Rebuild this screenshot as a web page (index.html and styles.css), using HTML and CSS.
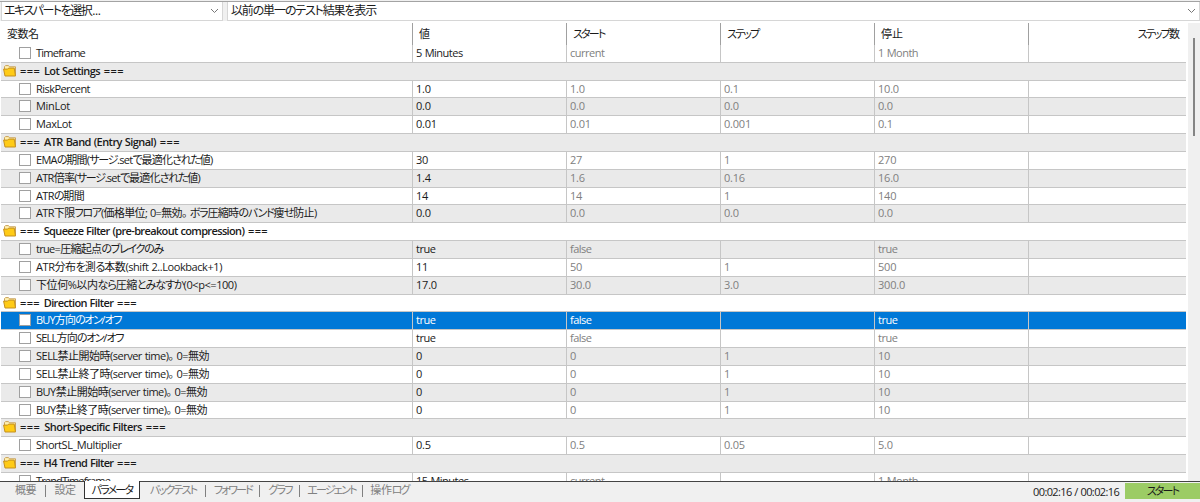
FILE: index.html
```html
<!DOCTYPE html>
<html lang="ja">
    <head>
        <meta charset="UTF-8" />
        <title>Strategy Tester</title>
        <link rel="stylesheet" href="styles.css">
    </head>
    <body>
        <div class="tester">
            <div class="toolbar">
                <div class="select expert">
                    <span class="label-expert">エキスパートを選択<span class="dots">...</span></span>
                    <svg class="arrow" width="9" height="6" viewBox="0 0 9 6"><path d="M1 1l3.5 3.5L8 1" /></svg>
                </div>
                <div class="select result">
                    <span class="label-result">以前の単一のテスト結果を表示</span>
                    <svg class="arrow" width="9" height="6" viewBox="0 0 9 6"><path d="M1 1l3.5 3.5L8 1" /></svg>
                </div>
            </div>
            <div class="content">
                <div class="grid">
                    <div class="header">
                        <div class="h-name">変数名</div>
                        <div>値</div>
                        <div><span class="kana">スタート</span></div>
                        <div><span class="kana">ステップ</span></div>
                        <div>停止</div>
                        <div class="h-steps"><span class="kana">ステップ</span>数</div>
                    </div>
                    <div id="rows"></div>
                </div>
                <div class="scrollbar"><div class="thumb"></div></div>
            </div>
            <div class="footer">
                <div class="tabs">
                    <div class="tab t1">概要</div>
                    <div class="tab t2">設定</div>
                    <div class="tab t3 active"><span class="kana">パラメータ</span></div>
                    <div class="tab t4"><span class="kana">バックテスト</span></div>
                    <div class="tab t5"><span class="kana">フォワード</span></div>
                    <div class="tab t6"><span class="kana">グラフ</span></div>
                    <div class="tab t7"><span class="kana">エージェント</span></div>
                    <div class="tab t8">操作<span class="kana">ログ</span></div>
                </div>
                <div class="time">00:02:16 / 00:02:16</div>
                <div class="start"><span class="kana">スタート</span></div>
            </div>
        </div>
        <script src="script.js"></script>
    </body>
</html>
```
FILE: styles.css
```css
body {
    margin: 0;
    background-color: #f0f0f0;
    font-family: "Open Sans", "Noto Sans CJK JP", sans-serif;
    font-size: 11px;
    color: #1a1a1a;
    font-feature-settings: "palt";
}
.tester {
    display: flex;
    flex-direction: column;
    width: 1200px;
    height: 502px;
    overflow: hidden;
}
.toolbar {
    display: flex;
    flex: none;
    gap: 4px;
    height: 20px;
    margin-top: 1px;
    box-sizing: border-box;
    border-top: 1px solid #a3a3a3;
    padding-left: 1px;
}
.select {
    display: flex;
    align-items: center;
    justify-content: space-between;
    box-sizing: border-box;
    height: 19px;
    padding: 0 3px;
    background-color: #fff;
    border: 1px solid #d6d6d6;
    border-top: none;
    font-size: 12px;
    line-height: 16px;
    white-space: nowrap;
}
.expert {
    width: 222px;
    padding-left: 2px;
}
.result {
    width: 973px;
}
.label-expert {
    letter-spacing: -1.5px;
}
.label-expert .dots {
    margin-left: 1px;
    letter-spacing: -0.3px;
}
.label-result {
    letter-spacing: -1.15px;
}
.arrow {
    fill: none;
    stroke: #777;
}
.content {
    display: flex;
    flex: none;
    height: 461px;
    box-sizing: border-box;
    padding: 1px 0 0 1px;
    background-color: #fff;
    border-bottom: 1px solid #444;
    overflow: hidden;
}
.grid {
    width: 1185px;
}
.header,
.row {
    display: grid;
    grid-template-columns: 411px 154px 154px 154px 154px 158px;
}
.header {
    height: 22px;
    margin-top: 1px;
}
.header div {
    border-left: 1px solid #a0a0a0;
    padding-left: 6px;
    line-height: 21px;
}
.header .h-name {
    border-left: none;
    padding-left: 6px;
    letter-spacing: -0.5px;
}
.header .h-steps {
    text-align: right;
    padding-right: 6px;
}
.header .kana {
    letter-spacing: -1.8px;
}
.row {
    height: 17.83px;
    box-sizing: border-box;
    border-bottom: 1px solid #c6c6c6;
    line-height: 15px;
    white-space: nowrap;
}
.row:nth-child(even) {
    background-color: #eaeaea;
}
.cell {
    border-left: 1px solid #c6c6c6;
    padding-left: 3px;
    color: #808080;
    letter-spacing: -0.2px;
}
.cell.value {
    color: #1a1a1a;
}
.cell.word {
    letter-spacing: -0.5px;
    word-spacing: 0.5px;
}
.name {
    display: flex;
    padding-left: 18px;
}
.box {
    flex: none;
    width: 10px;
    height: 10px;
    margin: 2px 5px 0 0;
    background-color: #fff;
    border: 1px solid #a0a0a0;
}
.group {
    display: flex;
    padding-left: 2px;
    font-weight: 600;
}
.folder {
    margin: 1px 3px 0 0;
}
.fit {
    letter-spacing: var(--spacing, 0);
    word-spacing: 0.5px;
}
.fit .kana {
    letter-spacing: calc(var(--spacing, 0px) - 0.6px);
}
.fit .rule {
    letter-spacing: calc(var(--spacing, 0px) + 1px);
}
.fit .stop {
    margin-right: 3px;
}
.row.selected {
    background-color: #0078d7;
}
.row.selected div {
    color: #fff;
}
.kana {
    letter-spacing: -1.8px;
}
.scrollbar {
    width: 12px;
    margin: 1px 0 0 2px;
    background-color: #f0f0f0;
}
.thumb {
    width: 2px;
    height: 98px;
    margin: 15px 0 0 5px;
    background-color: #858585;
}
.footer {
    display: flex;
    flex: 1;
}
.tabs {
    display: flex;
    flex: 1;
    margin-top: -1px;
    padding-left: 1px;
}
.tab {
    box-sizing: border-box;
    height: 18px;
    line-height: 18px;
    text-align: center;
    color: #808080;
    white-space: nowrap;
    background: linear-gradient(#808080, #808080) right 4px / 1px 12px no-repeat;
}
.tab.active {
    border: 1px solid #333;
    border-top: none;
    background: #fff;
    color: #1a1a1a;
}
.t1 { width: 45px; padding-left: 4px; letter-spacing: -0.4px; }
.t2 { width: 38px; background: none; letter-spacing: -0.4px; }
.t3 { width: 56px; }
.t4 { width: 66px; }
.t5 { width: 54px; }
.t6 { width: 40px; }
.t7 { width: 63px; }
.t8 { width: 53px; background: none; letter-spacing: -0.4px; }
.time {
    width: 92px;
    line-height: 20px;
    letter-spacing: -0.6px;
    word-spacing: 0.4px;
    white-space: nowrap;
}
.start {
    width: 75px;
    height: 16px;
    margin-top: 1px;
    background-color: #9ccc65;
    line-height: 16px;
    text-align: center;
}
```
FILE: script.js
```js
// label, label width, value, start, step, stop
var rows = [
    ["Timeframe", 49, "5 Minutes", "current", "", "1 Month"],
    ["=== Lot Settings ===", 104],
    ["RiskPercent", 54, "1.0", "1.0", "0.1", "10.0"],
    ["MinLot", 34, "0.0", "0.0", "0.0", "0.0"],
    ["MaxLot", 35.5, "0.01", "0.01", "0.001", "0.1"],
    ["=== ATR Band (Entry Signal) ===", 160],
    ["EMAの期間(サージ.setで最適化された値)", 176.5, "30", "27", "1", "270"],
    ["ATR倍率(サージ.setで最適化された値)", 164, "1.4", "1.6", "0.16", "16.0"],
    ["ATRの期間", 48, "14", "14", "1", "140"],
    ["ATR下限フロア(価格単位; 0=無効。ボラ圧縮時のバンド痩せ防止)", 280.5, "0.0", "0.0", "0.0", "0.0"],
    ["=== Squeeze Filter (pre-breakout compression) ===", 248],
    ["true=圧縮起点のブレイクのみ", 127, "true", "false", "", "true"],
    ["ATR分布を測る本数(shift 2..Lookback+1)", 186, "11", "50", "1", "500"],
    ["下位何%以内なら圧縮とみなすか(0<p<=100)", 200.5, "17.0", "30.0", "3.0", "300.0"],
    ["=== Direction Filter ===", 117],
    ["BUY方向のオン/オフ", 85, "true", "false", "", "true"],
    ["SELL方向のオン/オフ", 87, "true", "false", "", "true"],
    ["SELL禁止開始時(server time)。0=無効", 173, "0", "0", "1", "10"],
    ["SELL禁止終了時(server time)。0=無効", 173, "0", "0", "1", "10"],
    ["BUY禁止開始時(server time)。0=無効", 171, "0", "0", "1", "10"],
    ["BUY禁止終了時(server time)。0=無効", 171, "0", "0", "1", "10"],
    ["=== Short-Specific Filters ===", 146],
    ["ShortSL_Multiplier", 85.5, "0.5", "0.5", "0.05", "5.0"],
    ["=== H4 Trend Filter ===", 117],
    ["TrendTimeframe", 74, "15 Minutes", "current", "", "1 Month"]
];
var selected = 15;

var folder = '<svg class="folder" width="14" height="13" viewBox="0 0 14 13">' +
    '<path d="M1.5 5V2.6l1-1h3l1 1.2h6V11" fill="#fff0b0" stroke="#c9a25a"/>' +
    '<path d="M.6 5.1h4l1-1h5.6l1.3 7.9H2z" fill="#ffcb16" stroke="#c4901f"/></svg>';

function label(r) {
    var text = r[0].replace(/</g, "&lt;");
    // kana is set tighter than kanji
    text = text.replace(/[\u3041-\u30ff]+/g, '<span class="kana">$&</span>');
    text = text.replace("。", '<span class="stop">。</span>');
    text = text.replace(/^=== | ===$/g, '<span class="rule">$&</span>');
    return '<span class="fit" data-width="' + r[1] + '">' + text + "</span>";
}

var html = "";
for (var i = 0; i < rows.length; i++) {
    var r = rows[i];
    html += '<div class="row' + (i == selected ? " selected" : "") + '">';
    if (r.length == 2) {
        html += '<div class="group">' + folder + label(r) + "</div>";
    } else {
        html += '<div class="name"><div class="box"></div>' + label(r) + "</div>";
        for (var j = 2; j < 6; j++) {
            var cls = "cell" + (j == 2 ? " value" : "") + (/[a-z]/.test(r[j]) ? " word" : "");
            html += '<div class="' + cls + '">' + r[j] + "</div>";
        }
        html += '<div class="cell"></div>';
    }
    html += "</div>";
}
document.getElementById("rows").innerHTML = html;

// spread each label over its width
var labels = document.querySelectorAll(".fit");
for (var k = 0; k < labels.length; k++) {
    var el = labels[k];
    var gap = (Number(el.dataset.width) - el.getBoundingClientRect().width) / el.textContent.length;
    el.style.setProperty("--spacing", gap.toFixed(3) + "px");
}
```
